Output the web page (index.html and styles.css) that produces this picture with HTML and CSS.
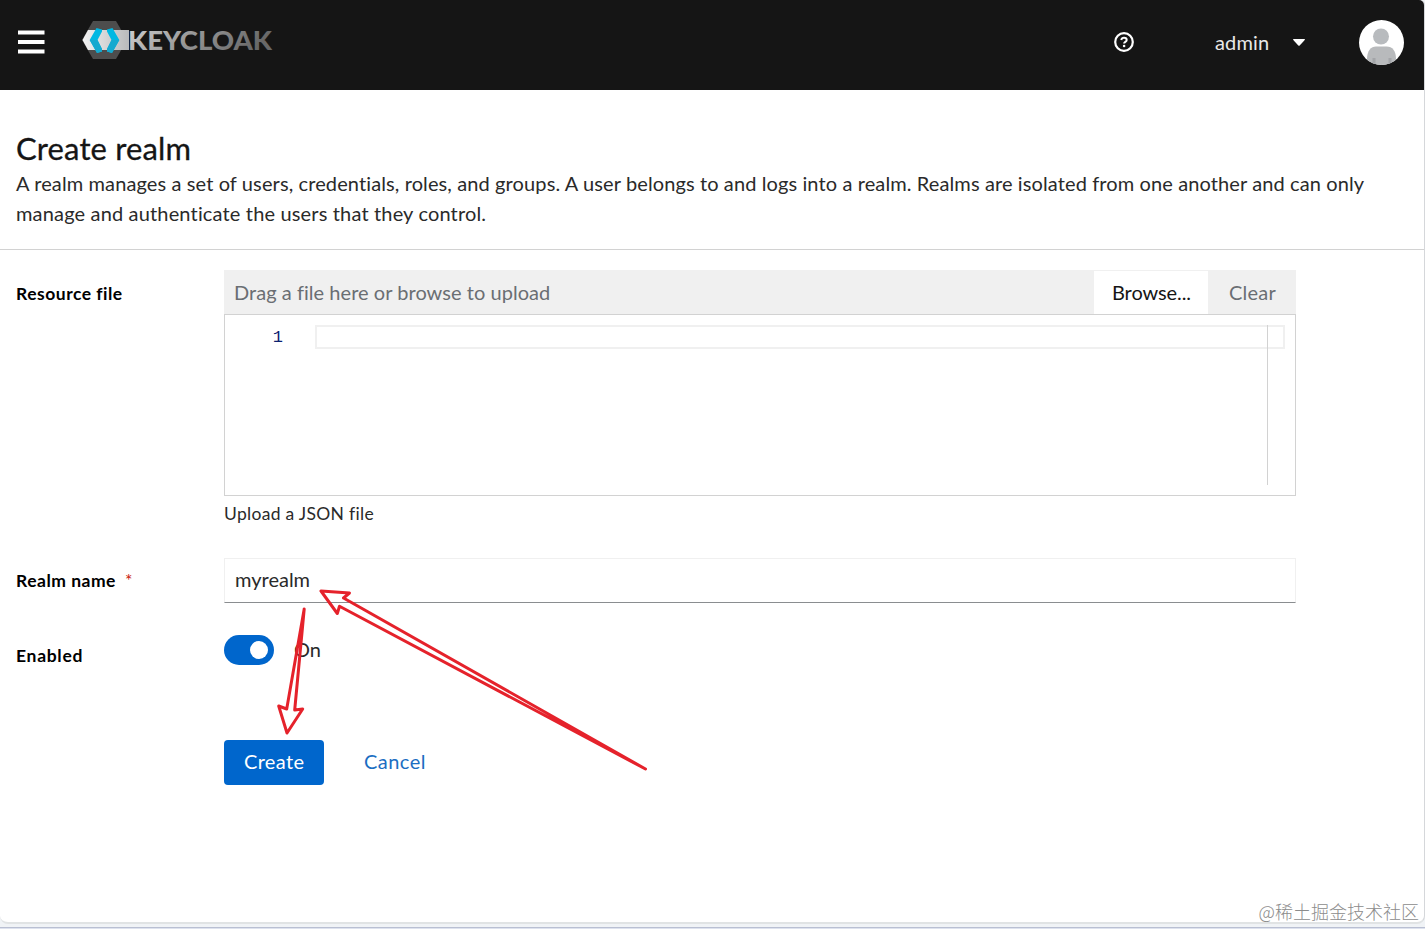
FILE: index.html
```
<!DOCTYPE html>
<html lang="en">
<head>
<meta charset="utf-8">
<title>Keycloak Administration Console</title>
<link rel="stylesheet" href="styles.css">
</head>
<body>
<div class="page">

	<header class="masthead">
		<svg class="bars" width="27" height="24" viewBox="0 0 27 24">
			<path d="M0 .5h26.500v4H0zM0 10h26.500v4H0zM0 19.500h26.500v4H0z" fill="#fff"/>
		</svg>
		<svg class="brand" width="192" height="40" viewBox="0 0 192 40">
			<defs>
				<linearGradient id="band" x1="0" x2="1">
					<stop offset="0" stop-color="#f2f2f2"/>
					<stop offset="1" stop-color="#b9b9bb"/>
				</linearGradient>
				<linearGradient id="word" x1="0" x2="1" y2=".25">
					<stop offset="0" stop-color="#d4d4d4"/>
					<stop offset=".5" stop-color="#989898"/>
					<stop offset="1" stop-color="#686868"/>
				</linearGradient>
			</defs>
			<path d="M11 1h23l11 19-11 19H11L0 20z" fill="#4d4d4d"/>
			<path d="M6 10h41v20H6L.5 20z" fill="url(#band)"/>
			<path d="M14.500 8l5.500 1.500v2L15.500 20l4.500 9v2.500L15 33 7.700 20z" fill="#00b8e3"/>
			<path d="M7.700 20h7.800l4.500 9v2.500L15 33z" fill="#15a9cf"/>
			<path d="M30.500 8L25 9.500v2l4.500 8.500-4.500 9v2.500l5 1.500 7.300-13z" fill="#00b8e3"/>
			<path d="M37.300 20h-7.800l-4.500 9v2.500l5 1.500z" fill="#15a9cf"/>
			<text x="46" y="29.500" textLength="144" lengthAdjust="spacingAndGlyphs" class="brand-word" fill="url(#word)">KEYCLOAK</text>
		</svg>
		<div class="tools">
			<svg class="help" width="20" height="20" viewBox="0 0 20 20" fill="none" stroke="#fff">
				<circle cx="10" cy="10" r="8.800" stroke-width="2.200"/>
				<path d="M7.200 7.900C7.600 6.400 8.700 5.700 10 5.700c1.600 0 2.700.9 2.700 2.200 0 1.900-2.600 1.900-2.600 3.500" stroke-width="2"/>
				<circle cx="10.100" cy="14" r="1.300" fill="#fff" stroke="none"/>
			</svg>
			<span class="user">admin</span>
			<svg class="caret" width="12" height="7" viewBox="0 0 12 7"><path d="M.6 0h10.800q.9.300.3 1L6.700 6.500q-.7.600-1.400 0L.3 1q-.6-.7.300-1z" fill="#fff"/></svg>
			<svg class="avatar" width="45" height="45" viewBox="0 0 45 45">
				<defs><clipPath id="face"><circle cx="22.500" cy="22.500" r="22.500"/></clipPath></defs>
				<circle cx="22.500" cy="22.500" r="22.500" fill="#fff"/>
				<g clip-path="url(#face)">
					<circle cx="22" cy="16.500" r="8" fill="#b8bbbe"/>
					<path d="M8 45v-6c0-8 4-12.500 9-12.500h10.500c6 0 9.500 4.500 9.500 12.500v6z" fill="#b8babc"/>
					<path d="M13.500 38h3v7h-3zM29.500 38h3v7h-3z" fill="#a3a5a8"/>
				</g>
			</svg>
		</div>
	</header>

	<section class="intro">
		<h1>Create realm</h1>
		<p><span class="line1">A realm manages a set of users, credentials, roles, and groups. A user belongs to and logs into a realm. Realms are isolated from one another and can only</span><br>
		<span class="line2">manage and authenticate the users that they control.</span></p>
	</section>

	<form class="form">
		<div class="row file">
			<div class="label">Resource file</div>
			<div class="control">
				<div class="upload">
					<div class="filename">Drag a file here or browse to upload</div>
					<div class="browse">Browse...</div>
					<div class="clear">Clear</div>
				</div>
				<div class="editor">
					<div class="gutter">1</div>
					<div class="code">
						<div class="current"></div>
						<div class="ruler"></div>
					</div>
				</div>
				<div class="helper">Upload a JSON file</div>
			</div>
		</div>

		<div class="row name">
			<div class="label">Realm name<span class="required">*</span></div>
			<div class="control text">myrealm</div>
		</div>

		<div class="row enabled">
			<div class="label">Enabled</div>
			<div class="control switch">
				<span class="toggle"></span>
				<span class="on">On</span>
			</div>
		</div>

		<div class="actions">
			<div class="create">Create</div>
			<div class="cancel">Cancel</div>
		</div>
	</form>

	<!-- hand drawn arrows over the form -->
	<svg class="arrows" width="340" height="190" viewBox="270 585 340 190" fill="none" stroke="#e5222b" stroke-width="3" stroke-linejoin="round">
		<path d="M321 591l28.500 2-6 5L645.500 769 339.500 606.300l-2.200 7.200z"/>
		<path d="M304.200 609l-17.500 100-8-3 8.300 27 15.700-24-8 1z"/>
	</svg>
	<div class="watermark">@稀土掘金技术社区</div>
</div>
</body>
</html>
```

FILE: styles.css
```
* {
box-sizing: border-box;
}
body {
margin: 0;
height: 929px;
overflow: hidden;
background: linear-gradient(#f0f3f6 0, #f0f3f6 927px, #b9bfd2 927px, #b9bfd2 928px, #dde2ee 928px);
font-family: Lato, "Liberation Sans", sans-serif;
font-size: 20px;
line-height: 30px;
color: #2a2a2a;
}
.page {
position: relative;
height: 924px;
background: #fff;
border-right: 1px solid #d5d7da;
border-bottom: 2px solid #e0e3e4;
border-radius: 0 5px 8px 8px;
}
.masthead {
display: flex;
align-items: flex-start;
height: 90px;
padding: 20px 20px 0 18px;
background: #151515;
border-radius: 0 5px 0 0;
color: #fff;
}
.bars {
margin-top: 10px;
}
.brand {
margin-left: 37px;
}
.brand-word {
font-family: Lato, sans-serif;
font-size: 27px;
font-weight: 900;
}
.tools {
display: flex;
align-items: center;
height: 45px;
margin-left: auto;
}
.help {
margin-bottom: 2px;
}
.user {
width: 54px;
margin: 0 24px 2px 81px;
white-space: nowrap;
color: #e8e8e8;
letter-spacing: .15px;
}
.avatar {
margin: 0 0 0 54px;
}
.intro {
height: 160px;
padding: 39px 16px 0;
border-bottom: 1px solid #d2d2d2;
}
h1 {
margin: 0;
font-size: 31px;
font-weight: 400;
line-height: 39px;
letter-spacing: .15px;
color: #151515;
-webkit-text-stroke: .3px #151515;
}
p {
margin: 0;
white-space: nowrap;
}
.line1 {
letter-spacing: .11px;
}
.line2 {
letter-spacing: .16px;
}
.form {
padding: 20px 128px 0 16px;
}
.row {
display: grid;
grid-template-columns: 208px 1fr;
}
.label {
font-size: 17.500px;
font-weight: bold;
line-height: 26px;
letter-spacing: .5px;
color: #000;
}
.file {
height: 288px;
}
.file .label {
padding-top: 11px;
}
.upload {
display: flex;
height: 44px;
line-height: 44px;
background: #f0f0f0;
color: #6a6e73;
}
.filename {
flex: 1;
padding-left: 10px;
letter-spacing: .04px;
}
.browse {
width: 116px;
padding-left: 18px;
border: 1px solid #f0f0f0;
border-bottom: 0;
background: #fff;
color: #151515;
line-height: 42px;
letter-spacing: -.1px;
}
.clear {
width: 87px;
padding-left: 20px;
letter-spacing: .2px;
}
.editor {
display: flex;
height: 182px;
padding: 10px;
border: 1px solid #d2d2d2;
}
.gutter {
width: 80px;
padding-right: 32px;
font: 17px/25px "Liberation Mono", monospace;
text-align: right;
color: #0b216f;
}
.code {
position: relative;
flex: 1;
}
.current {
height: 24px;
border: 2px solid #f0f0f0;
}
.ruler {
position: absolute;
top: 0;
right: 0;
width: 18px;
height: 160px;
border-left: 1px solid #d2d2d2;
}
.helper {
padding-top: 5px;
font-size: 17.500px;
line-height: 26px;
letter-spacing: .3px;
}
.name .label {
padding-top: 10px;
}
.required {
margin-left: 9px;
color: #c9190b;
font-weight: 400;
}
.text {
height: 45px;
padding-left: 10px;
border: 1px solid #f0f0f0;
border-bottom-color: #8a8d90;
line-height: 41px;
}
.enabled {
margin-top: 32px;
}
.enabled .label {
padding-top: 8px;
letter-spacing: .7px;
}
.switch {
display: flex;
height: 30px;
line-height: 28px;
}
.toggle {
width: 50px;
height: 30px;
padding: 6px 6px 0 26px;
border-radius: 15px;
background: #06c;
}
.toggle::before {
content: "";
display: block;
width: 18px;
height: 18px;
border-radius: 50%;
background: #fff;
}
.on {
margin-left: 20px;
}
.actions {
display: flex;
margin: 71px 0 0 208px;
line-height: 43px;
}
.create {
width: 100px;
height: 45px;
padding-left: 20px;
border-radius: 4px;
background: #06c;
color: #fff;
letter-spacing: .35px;
}
.cancel {
margin-left: 40px;
color: #1b6ec2;
letter-spacing: .45px;
}
.arrows {
position: absolute;
left: 270px;
top: 585px;
overflow: visible;
}
.watermark {
position: absolute;
right: 5px;
bottom: -2px;
font: 300 18px/26px "Noto Sans CJK SC", sans-serif;
color: #8c8c8c;
white-space: nowrap;
}
```
